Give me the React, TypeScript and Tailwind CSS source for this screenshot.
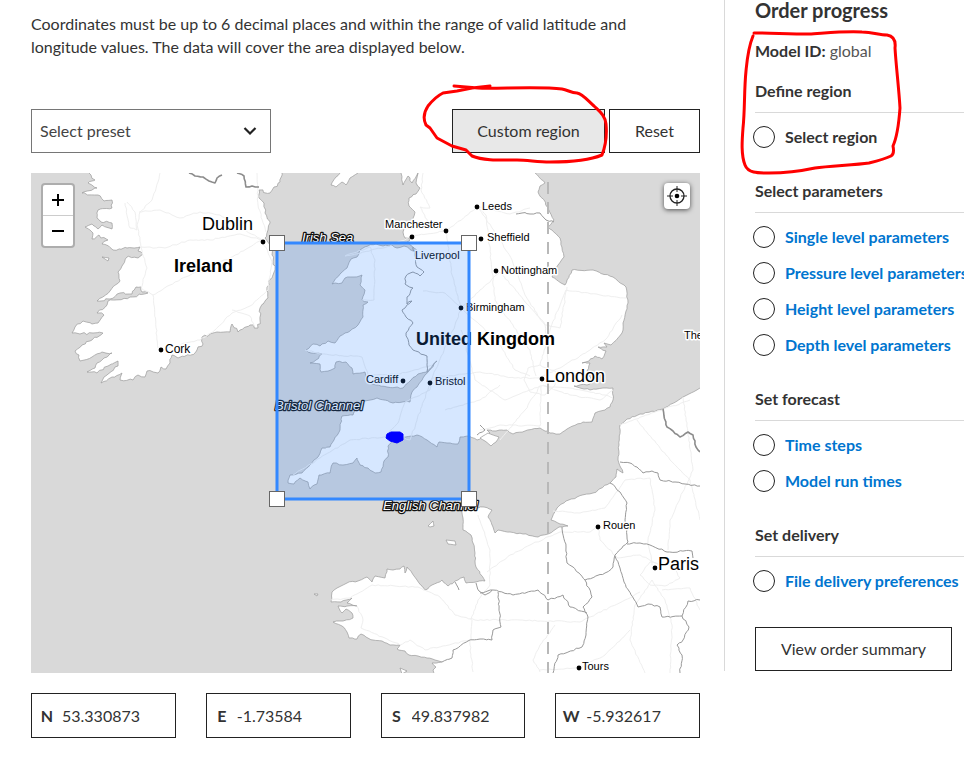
import type { ReactNode } from 'react';

type Point = [number, number];

/* ---------- map geometry helpers ---------- */

function parse(text: string): Point[] {
  return text
    .trim()
    .split(/\s+/)
    .map((pair) => pair.split(',').map(Number) as Point);
}

// Adds small, repeatable irregularities between points so coastlines read as natural.
function rough(text: string, amount: number, closed = false): string {
  const points = parse(text);
  if (closed) points.push(points[0]);
  let seed = points.length * 97;
  const random = () => {
    seed = (seed * 1103515245 + 12345) % 2147483648;
    return seed / 2147483648 - 0.5;
  };
  let d = `M${points[0][0]} ${points[0][1]}`;
  for (let i = 1; i < points.length; i++) {
    const [ax, ay] = points[i - 1];
    const [bx, by] = points[i];
    const steps = Math.max(1, Math.round(Math.hypot(bx - ax, by - ay) / 3));
    for (let s = 1; s < steps; s++) {
      const t = s / steps;
      const x = ax + (bx - ax) * t + random() * amount;
      const y = ay + (by - ay) * t + random() * amount;
      d += `L${x.toFixed(1)} ${y.toFixed(1)}`;
    }
    d += `L${bx} ${by}`;
  }
  return closed ? d + 'Z' : d;
}

const land: [string, number][] = [
  // Ireland
  ['90,165 89,173 95,180 88,183 97,188 82,193 98,195 104,201 112,200 112,208 98,210 97,218 101,222 112,223 112,229 102,225 98,229 92,224 85,227 93,233 92,239 99,235 108,240 102,244 113,250 127,248 140,247 138,251 143,254 138,258 127,257 122,266 118,272 120,281 110,291 97,301 110,299 120,293 132,294 136,287 141,287 142,292 148,293 130,297 108,301 107,305 97,313 104,315 98,323 92,324 83,321 75,327 72,333 80,334 93,333 103,333 90,341 82,345 75,351 79,355 80,361 92,357 102,352 112,353 104,358 97,363 95,368 87,372 97,373 108,366 118,361 118,366 112,371 104,377 101,383 112,377 122,373 120,380 133,380 138,375 145,377 147,371 158,373 161,367 166,369 170,363 172,355 178,358 190,355 197,350 203,344 202,337 217,332 230,332 232,324 238,332 250,325 258,328 260,320 260,308 268,298 267,287 275,270 272,255 270,245 265,238 268,230 270,223 265,213 264,203 259,198 259,190 270,193 274,187 280,182 282,173 282,165', 2.4],
  // Galloway
  ['340,165 340,173 336,177 331,185 336,187 342,182 346,185 350,178 358,173 358,165', 1],
  // Great Britain
  ['400,165 401,173 403,185 408,176 412,183 418,173 416,183 420,188 416,194 409,198 409,206 415,212 413,221 406,226 403,232 405,238 413,237 407,242 417,250 413,251 404,246 397,248 392,245 383,246 376,244 368,246 360,250 357,257 351,259 347,268 340,274 332,284 342,283 345,278 354,277 362,275 360,285 365,290 362,300 368,302 363,305 363,317 358,325 350,331 340,336 335,343 328,341 320,346 313,344 306,350 311,353 322,354 316,360 310,363 320,364 321,372 331,370 335,368 336,362 346,362 352,368 353,374 365,372 368,382 376,385 387,387 403,388 411,380 418,374 427,372 437,361 423,378 417,387 412,392 410,402 393,403 377,398 364,401 356,408 353,415 342,416 340,430 334,440 330,447 322,448 318,457 302,473 290,475 288,483 294,484 300,478 308,482 310,489 317,484 319,475 330,473 333,463 343,465 353,463 357,458 360,465 368,468 375,473 381,472 384,461 388,457 388,446 394,439 402,438 417,435 427,440 437,447 439,442 447,443 458,444 460,437 469,436 477,440 490,433 487,430 496,431 507,430 513,434 525,431 540,428 550,433 560,434 567,429 583,422 592,422 595,413 605,410 610,407 613,400 613,388 603,388 590,390 577,387 574,386 590,384 591,378 587,371 590,363 582,363 589,361 595,356 602,359 606,351 598,347 607,347 604,343 611,345 622,333 623,323 628,303 626,287 613,277 593,270 572,270 565,285 561,283 552,277 558,265 564,257 560,238 552,230 548,227 554,220 548,208 538,192 540,186 545,183 535,173 535,165', 1.4],
  // Isle of Wight
  ['480,438 488,433 499,437 496,442 491,446 485,441', 0.8],
  // France
  ['706,386 700,388 683,397 663,409 640,414 627,419 620,425 619,445 618,460 623,473 617,469 616,477 610,483 593,493 577,497 566,501 557,508 551,520 560,524 568,526 559,527 548,534 538,537 523,534 510,532 498,530 495,533 493,527 488,517 492,510 484,507 478,508 468,500 463,502 462,510 463,518 463,530 471,535 473,543 475,553 476,567 485,581 476,582 466,583 464,577 458,580 448,586 442,580 432,585 425,590 417,580 412,573 407,567 405,573 404,566 400,569 393,570 387,569 385,578 375,576 372,582 367,577 358,581 347,583 337,588 332,592 331,602 341,602 352,598 347,603 357,606 338,606 342,613 346,609 352,613 353,618 343,621 333,622 342,626 347,632 349,638 357,639 361,634 366,637 373,640 382,641 390,645 400,645 397,649 405,651 409,655 418,656 427,658 435,660 442,662 432,663 436,667 433,670 437,678 706,678', 1.4],
  // Small islands
  ['428,526 433,521 434,526 430,527', 0],
  ['446,540 455,541 456,545 448,544', 0],
  ['314,594 318,594 317,596', 0],
  ['102,257 109,258 108,261', 0],
  ['400,668 407,671 402,674', 0],
];

const roads = [
  '160,173 158,182 152,200 140,212 137,225 141,247 147,268 141,288 153,295 158,348',
  '139,212 160,210 180,218 200,212 220,215 262,240',
  '141,247 165,248 190,240 210,240 240,234 262,240 230,258 200,270 170,285 153,295',
  '262,240 272,262 268,290 250,306 232,313 215,330 200,340 166,348',
  '232,310 250,316 254,326',
  '257,173 258,205 266,232',
  '127,202 135,212 137,230 130,228 125,203',
  '420,207 430,225 446,231 478,207 500,240 512,260 525,295 545,325 548,362',
  '423,173 421,190 430,208 420,207',
  '446,231 452,275 461,308 480,325 500,345 515,370 530,376',
  '478,207 486,215 492,270 495,300 530,350 536,376',
  '478,207 510,214 530,208',
  '345,256 370,247 375,260 374,300 362,300',
  '345,256 390,246 412,236 446,231',
  '423,291 445,293 461,308 455,325 432,378 410,440 398,436',
  '461,308 500,272 545,325',
  '305,350 321,354 362,357 368,375 400,374 432,365',
  '432,378 480,372 515,378 538,378 560,368 590,350 605,340 622,315',
  '432,378 430,390 405,402 398,423 384,437 350,440 320,458 293,475',
  '461,330 475,380 505,400 540,386 570,388 605,395 613,398',
  '445,410 480,400 500,385',
  '500,440 525,410 540,386',
  '480,430 500,425 540,426 541,386',
  '540,365 550,330 566,290 600,295 626,298',
  '543,385 570,395 600,400 613,390',
  '545,325 560,328 567,287',
  '540,365 528,368 524,380 530,392 545,395 555,385 556,372 540,365',
  '331,600 350,598 372,585 418,587 440,597 455,615 475,620 520,620 580,622 625,600 640,592',
  '357,606 363,620 361,628 385,638 400,645 410,640 425,650 470,640',
  '471,620 478,600 490,585 490,550 478,515',
  '472,620 470,645 473,672',
  '487,572 510,555 530,545 560,532 590,532 598,526',
  '553,511 580,513 605,508 625,480 650,478 655,510 648,540 652,565',
  '637,420 670,460 690,480 700,520',
  '683,397 693,470 670,520 668,550',
  '598,526 600,540 618,558 640,555 662,566',
  '652,580 635,605 630,640 645,673',
  '652,580 665,600 672,625 670,673',
  '662,590 690,588 700,610',
  '640,575 650,585 665,586 680,578 672,565 650,562 640,575',
  '630,630 605,655 579,668 540,670',
  '555,625 540,645 533,660 540,672',
  '620,425 655,412 690,400',
];

const borders = [
  '413,247 417,267 424,272 420,276 413,272 406,276 405,284 413,288 407,297 407,304 412,301 402,310 406,317 413,323 406,333 409,345 413,350 427,356 427,372',
  '477,435 485,430 480,425',
  '516,214 522,213 530,214 540,213 546,220 554,222',
  '620,462 630,463 637,467 643,473 652,471 658,473 660,480 675,482 685,484 700,486',
  '610,483 620,492 627,503 625,520 628,542 615,555 613,567 605,573 585,580 573,567 567,563 566,547 562,527',
  '627,544 640,543 650,545 667,552 692,551 693,558',
  '615,556 620,568 624,582 638,607 648,604 660,607 662,617 682,616 688,601 700,600',
  '682,616 689,627 683,640 677,645 682,655 680,673',
  '585,580 592,597 583,607 588,617 586,635 582,647 558,655 553,673',
  '480,593 493,590 513,595 538,590 548,600 563,595 570,607 587,613',
  '498,592 501,627 493,630 492,640 480,639 468,641 453,650 452,658 442,662',
  '476,583 479,591 485,595 492,590',
  '455,582 459,590',
];

const thickBorders = [
  '189,173 195,176 203,177 209,181 215,183 217,178 222,175',
  '237,173 244,176 246,187 252,186 259,187',
  '663,409 664,416 667,427 673,431 680,437 688,432 693,435 696,447 700,452',
];

type Place = { name: string; x: number; y: number; size: number; bold?: boolean; dot?: Point };

const places: Place[] = [
  { name: 'Dublin', x: 202, y: 230, size: 18, dot: [263, 242] },
  { name: 'Ireland', x: 174, y: 272, size: 18, bold: true },
  { name: 'Cork', x: 165, y: 353, size: 12, dot: [161, 350] },
  { name: 'Leeds', x: 482, y: 210, size: 11, dot: [477, 207] },
  { name: 'Manchester', x: 385, y: 228, size: 11, dot: [446, 231] },
  { name: 'Liverpool', x: 415, y: 259, size: 11, dot: [412, 237] },
  { name: 'Sheffield', x: 487, y: 241, size: 11, dot: [481, 239] },
  { name: 'Nottingham', x: 501, y: 274, size: 11, dot: [496, 271] },
  { name: 'Birmingham', x: 466, y: 311, size: 11, dot: [461, 308] },
  { name: 'United Kingdom', x: 416, y: 345, size: 18, bold: true },
  { name: 'Cardiff', x: 366, y: 383, size: 11, dot: [403, 381] },
  { name: 'Bristol', x: 435, y: 385, size: 11, dot: [430, 383] },
  { name: 'London', x: 545, y: 382, size: 18, dot: [542, 379] },
  { name: 'The', x: 684, y: 339, size: 11 },
  { name: 'Rouen', x: 603, y: 529, size: 11, dot: [598, 527] },
  { name: 'Paris', x: 658, y: 570, size: 18, dot: [655, 568] },
  { name: 'Tours', x: 582, y: 670, size: 11, dot: [579, 668] },
];

const seas = [
  { name: 'Irish Sea', x: 302, y: 242 },
  { name: 'Bristol Channel', x: 275, y: 410 },
  { name: 'English Channel', x: 383, y: 510 },
];

const handles: Point[] = [
  [277, 243],
  [469, 243],
  [277, 499],
  [469, 499],
];

function MapDrawing() {
  return (
    <svg
      viewBox="31 173 669 500"
      preserveAspectRatio="xMidYMid slice"
      className="block h-full w-full font-['Liberation_Sans',Arial,sans-serif]"
      role="img"
      aria-label="Map of Ireland, the United Kingdom and northern France with the selected region"
    >
      <rect x="31" y="173" width="669" height="500" fill="#d9d9d9" />
      <g fill="#fff" stroke="#999" strokeWidth="0.7" strokeLinejoin="round">
        {land.map(([text, amount]) => (
          <path key={text} d={rough(text, amount, true)} />
        ))}
      </g>
      <g fill="none" stroke="#efefef" strokeWidth="1" strokeLinejoin="round">
        {roads.map((text) => (
          <path key={text} d={rough(text, 1.2)} />
        ))}
      </g>
      <g fill="none" stroke="#999" strokeWidth="1" strokeLinejoin="round">
        {borders.map((text) => (
          <path key={text} d={rough(text, 1.6)} />
        ))}
      </g>
      <g fill="none" stroke="#8c8c8c" strokeWidth="1.6" strokeLinejoin="round">
        {thickBorders.map((text) => (
          <path key={text} d={rough(text, 1)} />
        ))}
      </g>
      <path d="M548 182V673" stroke="#b8b8b8" strokeWidth="2" strokeDasharray="12 8" />
      <g stroke="#fff" strokeWidth="3" strokeLinejoin="round" paintOrder="stroke">
        {places.map((p) => (
          <g key={p.name}>
            {p.dot && <circle cx={p.dot[0]} cy={p.dot[1]} r="2.4" stroke="none" />}
            <text x={p.x} y={p.y} fontSize={p.size} fontWeight={p.bold ? 700 : 400}>
              {p.name}
            </text>
          </g>
        ))}
      </g>
      <g fill="#fff" stroke="#111" strokeWidth="2.5" strokeLinejoin="round" paintOrder="stroke" fontStyle="italic" fontSize="13">
        {seas.map((s) => (
          <text key={s.name} x={s.x} y={s.y}>
            {s.name}
          </text>
        ))}
      </g>
      <rect x="277" y="243" width="192" height="256" fill="#3388ff" fillOpacity="0.2" stroke="#3388ff" strokeWidth="3" />
      {handles.map(([x, y]) => (
        <rect key={`${x}-${y}`} x={x - 7.5} y={y - 7.5} width="15" height="15" fill="#fff" stroke="#666" />
      ))}
      <path
        d="M387 434L391 432L400 432L403 434L403 440L397 443L390 441L386 438Z"
        fill="#0000ff"
        stroke="#0000ff"
        strokeLinejoin="round"
      />
    </svg>
  );
}

function RegionMap() {
  return (
    <div className="relative mt-5 h-[500px] overflow-hidden">
      <MapDrawing />
      <div className="absolute top-2.5 left-2.5 flex w-[34px] flex-col overflow-hidden rounded border-2 border-black/20 bg-white bg-clip-padding">
        <button type="button" aria-label="Zoom in" className="flex h-[31px] items-center justify-center border-b border-[#ccc]">
          <svg viewBox="0 0 14 14" className="size-3.5" stroke="#000" strokeWidth="2" aria-hidden="true">
            <path d="M1 7h12M7 1v12" />
          </svg>
        </button>
        <button type="button" aria-label="Zoom out" className="flex h-[30px] items-center justify-center">
          <svg viewBox="0 0 14 14" className="size-3.5" stroke="#000" strokeWidth="2" aria-hidden="true">
            <path d="M1 7h12" />
          </svg>
        </button>
      </div>
      <button
        type="button"
        aria-label="Show my location"
        className="absolute top-2.5 right-2.5 flex size-[26px] items-center justify-center rounded bg-white shadow-[0_1px_5px_rgba(0,0,0,0.65)]"
      >
        <svg viewBox="0 0 20 20" className="size-5" fill="none" stroke="#222" aria-hidden="true">
          <circle cx="10" cy="10" r="7" strokeWidth="1.3" />
          <circle cx="10" cy="10" r="2.3" fill="#000" stroke="none" />
          <path d="M10 0v6M10 14v6M0 10h6M14 10h6" strokeWidth="1" />
        </svg>
      </button>
    </div>
  );
}

/* ---------- form pieces ---------- */

function CoordinateField({ id, letter, name, value }: { id: string; letter: string; name: string; value: string }) {
  return (
    <div className="flex h-[45px] min-w-0 items-center border border-[#222]">
      <label htmlFor={id} aria-label={name} className="w-[30px] shrink-0 text-center font-bold">
        {letter}
      </label>
      <input id={id} type="text" defaultValue={value} className="h-full min-w-0 flex-1 outline-none" />
    </div>
  );
}

function ProgressSection({ title, children }: { title: string; children: ReactNode }) {
  return (
    <section className="mb-6">
      <h3 className="border-b border-[#d9d9d9] pb-[9px] font-bold">{title}</h3>
      <ul className="pt-1.5">{children}</ul>
    </section>
  );
}

function ProgressItem({ label, current = false }: { label: string; current?: boolean }) {
  return (
    <li className="-ml-0.5 flex h-9 items-center gap-2.5 font-bold whitespace-nowrap">
      <span className="size-[22px] shrink-0 rounded-full border border-[#222]" aria-hidden="true" />
      {current ? (
        <span>{label}</span>
      ) : (
        <a href="#" className="text-[#0075cf]">
          {label}
        </a>
      )}
    </li>
  );
}

function MarkerStrokes() {
  return (
    <svg
      viewBox="0 0 964 768"
      className="pointer-events-none absolute top-0 left-0 h-[768px] w-[964px]"
      fill="none"
      stroke="#ff0000"
      strokeWidth="3"
      strokeLinecap="round"
      strokeLinejoin="round"
      aria-hidden="true"
    >
      <path d="M454 86L478 88C496 89 540 86 562 89C568 90 571 93 577 93C583 94 588 101 594 106C599 111 605 115 606 124C607 135 606 145 602 155C588 161 563 162 550 162C537 162 528 160 517 160C502 160 484 161 472 156L466 150L452 146L437 138L430 128L426 125C423 119 424 112 428 106C432 101 437 96 443 93L457 91L472 88L490 86" />
      <path d="M754 33C770 33 790 34 809 34C826 33 845 31 862 32C873 32 879 35 887 35C893 36 896 40 895 48C896 65 899 90 900 108C899 122 897 137 893 146C894 151 893 155 891 156C885 159 877 161 869 163C855 165 829 166 815 168C801 171 786 173 769 173C757 173 748 173 745 165C741 155 742 141 743 128C745 110 744 90 746 71C747 61 748 48 753 36" />
    </svg>
  );
}

/* ---------- page ---------- */

export default function App() {
  return (
    <div className="relative flex overflow-hidden bg-white font-['Lato','Noto_Sans',sans-serif] text-base text-[#333]">
      <main className="min-w-0 flex-1 pt-3 pr-6 pl-[31px]">
        <p className="max-w-[640px] leading-[23px]">
          Coordinates must be up to 6 decimal places and within the range of valid latitude and longitude values. The
          data will cover the area displayed below.
        </p>

        <div className="mt-[51px] flex items-center">
          <div className="relative h-11 w-60">
            <select
              aria-label="Preset region"
              className="h-full w-full appearance-none border border-[#767676] bg-white px-2 text-[#444] outline-none"
            >
              <option>Select preset</option>
            </select>
            <svg
              viewBox="0 0 14 10"
              className="pointer-events-none absolute top-[17px] right-3.5 h-2.5 w-3.5"
              fill="none"
              stroke="#222"
              strokeWidth="2.2"
              aria-hidden="true"
            >
              <path d="M1.5 2L7 7.5L12.5 2" />
            </svg>
          </div>
          <button type="button" className="ml-auto h-11 w-[153px] border border-[#222] bg-[#e8e8e8]">
            Custom region
          </button>
          <button type="button" className="ml-1 h-11 w-[91px] border border-[#222] bg-white">
            Reset
          </button>
        </div>

        <RegionMap />

        <div className="mt-5 grid grid-cols-4 gap-[30px]">
          <CoordinateField id="north" letter="N" name="North" value="53.330873" />
          <CoordinateField id="east" letter="E" name="East" value="-1.73584" />
          <CoordinateField id="south" letter="S" name="South" value="49.837982" />
          <CoordinateField id="west" letter="W" name="West" value="-5.932617" />
        </div>
      </main>

      <aside className="w-60 shrink-0 self-start border-l border-[#d9d9d9] pl-[30px]">
        <h2 className="mb-[19px] text-xl leading-5 font-bold">Order progress</h2>
        <p className="mb-4">
          <strong>Model ID:</strong> <span className="text-[#555]">global</span>
        </p>
        <ProgressSection title="Define region">
          <ProgressItem label="Select region" current />
        </ProgressSection>
        <ProgressSection title="Select parameters">
          <ProgressItem label="Single level parameters" />
          <ProgressItem label="Pressure level parameters" />
          <ProgressItem label="Height level parameters" />
          <ProgressItem label="Depth level parameters" />
        </ProgressSection>
        <ProgressSection title="Set forecast">
          <ProgressItem label="Time steps" />
          <ProgressItem label="Model run times" />
        </ProgressSection>
        <ProgressSection title="Set delivery">
          <ProgressItem label="File delivery preferences" />
        </ProgressSection>
        <button type="button" className="mt-7 block h-11 w-[197px] border border-[#222] bg-white">
          View order summary
        </button>
      </aside>

      <MarkerStrokes />
    </div>
  );
}
